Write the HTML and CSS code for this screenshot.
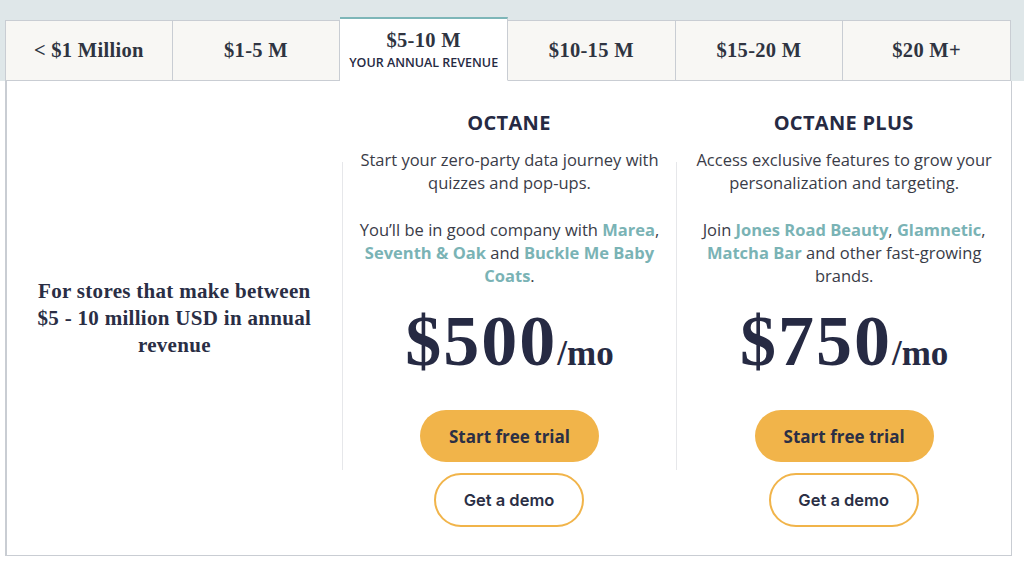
FILE: index.html
```html
<!DOCTYPE html>
<html lang="en">
<head>
	<meta charset="UTF-8">
	<title>Pricing</title>
	<meta name="viewport" content="width=device-width, initial-scale=1.0">
	<link rel="stylesheet" href="styles.css">
</head>
<body>
	<div class="band">
		<div class="tabs">
			<div class="tab">&lt; $1 Million</div>
			<div class="tab">$1-5 M</div>
			<div class="tab tab--active">
				<span>$5-10 M</span>
				<span class="tab--sub">Your annual revenue</span>
			</div>
			<div class="tab">$10-15 M</div>
			<div class="tab">$15-20 M</div>
			<div class="tab">$20 M+</div>
		</div>
	</div>

	<div class="card">
		<div class="intro">
			<p class="intro--text">For stores that make between $5 - 10 million USD in annual revenue</p>
		</div>

		<div class="plan">
			<h2 class="plan--name">OCTANE</h2>
			<div class="plan--body">
				<p class="plan--text">Start your zero-party data journey with quizzes and pop-ups.</p>
				<p class="plan--text">You’ll be in good company with <a class="brand">Marea</a>, <a class="brand">Seventh &amp; Oak</a> and <a class="brand">Buckle Me Baby Coats</a>.</p>
				<div class="price"><span class="price--amount">$500</span><span class="price--unit">/mo</span></div>
				<button class="button button--trial">Start free trial</button>
			</div>
			<button class="button button--demo">Get a demo</button>
		</div>

		<div class="plan">
			<h2 class="plan--name">OCTANE PLUS</h2>
			<div class="plan--body">
				<p class="plan--text">Access exclusive features to grow your personalization and targeting.</p>
				<p class="plan--text">Join <a class="brand">Jones Road Beauty</a>, <a class="brand">Glamnetic</a>, <a class="brand">Matcha Bar</a> and other fast-growing brands.</p>
				<div class="price"><span class="price--amount">$750</span><span class="price--unit">/mo</span></div>
				<button class="button button--trial">Start free trial</button>
			</div>
			<button class="button button--demo">Get a demo</button>
		</div>
	</div>
</body>
</html>
```

FILE: styles.css
```css
body {
	margin: 0;
	background: #ffffff;
	color: #262a43;
	font-family: "Open Sans", sans-serif;
}

.band {
	background: #dfe7e9;
	padding-top: 17px;
}

.tabs {
	display: grid;
	grid-template-columns: repeat(6, 1fr);
	align-items: end;
	width: 1006px;
	margin-left: 5px;
}

.tab {
	display: flex;
	flex-direction: column;
	justify-content: center;
	align-items: center;
	height: 59px;
	background: #f8f7f4;
	border: 1px solid #c9cdd3;
	border-left-width: 0;
	font-family: "Liberation Serif", serif;
	font-weight: bold;
	font-size: 20.5px;
	letter-spacing: 0.3px;
	color: #2f3441;
}

.tab:first-child {
	border-left-width: 1px;
}

.tab--active {
	height: 61px;
	background: #ffffff;
	border-top: 2px solid #7db6b8;
	border-bottom-color: #ffffff;
	justify-content: flex-start;
}

.tab--active span:first-child {
	margin-top: 9px;
	line-height: 24px;
}

.tab--sub {
	font-family: "Open Sans", sans-serif;
	font-weight: 600;
	font-size: 12.5px;
	letter-spacing: 0;
	text-transform: uppercase;
	line-height: 17px;
	margin-top: 2px;
	color: #262a43;
}

.card {
	display: grid;
	grid-template-columns: repeat(3, 1fr);
	width: 1004px;
	margin-left: 5px;
	border: 1px solid #c9cdd3;
	border-top: none;
	border-left-width: 2px;
}

.intro {
	display: flex;
	align-items: center;
	justify-content: center;
	padding: 0 26px;
}

.intro--text {
	margin: 0;
	text-align: center;
	font-family: "Liberation Serif", serif;
	font-weight: bold;
	font-size: 21px;
	letter-spacing: 0.3px;
	line-height: 27px;
	color: #2a2e45;
}

.plan {
	display: flex;
	flex-direction: column;
	align-items: center;
	padding: 30px 0 28px;
}

.plan--name {
	margin: 0 0 13px;
	font-size: 20px;
	line-height: 24px;
	font-weight: 700;
	letter-spacing: 0.3px;
}

.plan--body {
	display: flex;
	flex-direction: column;
	align-items: center;
	align-self: stretch;
	border-left: 1px solid #e6e7ea;
	border-image: linear-gradient(to bottom, transparent 15px, #e6e7ea 15px) 1;
	padding: 0 10px 8px;
}

.plan--text {
	margin: 0 0 24px;
	text-align: center;
	font-size: 16.5px;
	line-height: 23px;
	color: #3a3c48;
}

.plan--text:last-of-type {
	margin-bottom: 0;
}

.brand {
	color: #7ab3b5;
	font-weight: 700;
}

.price {
	display: flex;
	align-items: baseline;
	height: 70px;
	margin-top: 19px;
	line-height: 70px;
	font-family: "Liberation Serif", serif;
	font-weight: bold;
	color: #262a43;
}

.price--amount {
	font-size: 72px;
	letter-spacing: 2px;
}

.price--unit {
	font-size: 35px;
}

.button {
	display: flex;
	justify-content: center;
	align-items: center;
	border-radius: 30px;
	color: #2b2f45;
	cursor: pointer;
}

.button--trial {
	width: 179px;
	height: 52px;
	margin-top: 34px;
	border: none;
	background: #f1b44a;
	font-family: "Open Sans", sans-serif;
	font-weight: 700;
	font-size: 17px;
}

.button--demo {
	width: 150px;
	height: 54px;
	margin-top: 3px;
	border: 2px solid #f1b44a;
	background: #ffffff;
	font-family: Inter, sans-serif;
	font-weight: 600;
	font-size: 16.5px;
}
```
